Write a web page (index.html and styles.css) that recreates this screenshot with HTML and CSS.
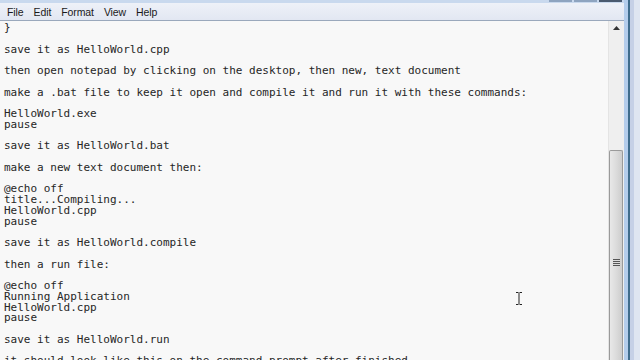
FILE: index.html
```html
<!DOCTYPE html>
<html>
<head>
<meta charset="utf-8">
<link rel="stylesheet" href="styles.css">
</head>
<body>
<div class="window">
  <div class="client">
    <div class="titlestrip">
      <span class="tbtn"></span><span class="tbtn"></span><span class="tbtn close"></span>
    </div>
    <div class="menubar">
      <span class="menu">File</span>
      <span class="menu">Edit</span>
      <span class="menu">Format</span>
      <span class="menu">View</span>
      <span class="menu">Help</span>
    </div>
    <div class="editor">
      <pre class="text">}

save it as HelloWorld.cpp

then open notepad by clicking on the desktop, then new, text document

make a .bat file to keep it open and compile it and run it with these commands:

HelloWorld.exe
pause

save it as HelloWorld.bat

make a new text document then:

@echo off
title...Compiling...
HelloWorld.cpp
pause

save it as HelloWorld.compile

then a run file:

@echo off
Running Application
HelloWorld.cpp
pause

save it as HelloWorld.run

it should look like this on the command prompt after finished</pre>
      <div class="cursor">
        <svg width="8" height="15" viewBox="0 0 8 15"><path d="M1 1.5h2.5M4.5 1.5H7M4 2v11M1 13.5h2.5M4.5 13.5H7" stroke="#222" stroke-width="1" fill="none"/></svg>
      </div>
      <div class="scrollbar">
        <div class="arrow"><svg width="7" height="4" viewBox="0 0 7 4"><path d="M0 4L3.5 0L7 4Z" fill="#333"/></svg></div>
        <div class="track">
          <div class="thumb"><span class="grip"></span></div>
        </div>
      </div>
    </div>
  </div>
  <div class="frame">
    <span class="f1"></span><span class="f2"></span><span class="f3"></span>
  </div>
</div>
</body>
</html>
```
FILE: styles.css
```css
html, body {
  margin: 0;
  padding: 0;
  width: 640px;
  height: 360px;
  overflow: hidden;
  background: #f8f8f8;
}
.window {
  display: flex;
  width: 640px;
  height: 360px;
}
.client {
  flex: 1;
  display: flex;
  flex-direction: column;
  min-width: 0;
}
.titlestrip {
  height: 3px;
  background: #c9d9ee;
  display: flex;
  justify-content: flex-end;
  gap: 2px;
  padding-right: 2px;
}
.tbtn {
  width: 23px;
  height: 2px;
  background: #8ea4c0;
}
.tbtn.close {
  background: #4a5a70;
}
.menubar {
  height: 17px;
  background: linear-gradient(#eef1f8, #e2e7f2);
  border-bottom: 1px solid #9aa8bc;
  display: flex;
  align-items: center;
  font-family: "Liberation Sans", Arial, sans-serif;
  font-size: 10.5px;
  letter-spacing: -0.1px;
  color: #1a1a1a;
  padding-left: 7px;
  gap: 10px;
}
.editor {
  flex: 1;
  display: flex;
  position: relative;
  min-height: 0;
  background: #f8f8f8;
}
.text {
  flex: 1;
  margin: 0;
  padding: 2px 0 0 4px;
  font-family: "DejaVu Sans Mono", "Liberation Mono", monospace;
  font-size: 11px;
  line-height: 10.75px;
  color: #262626;
  overflow: hidden;
  white-space: pre;
}
.cursor {
  position: absolute;
  left: 515px;
  top: 270px;
}
.scrollbar {
  width: 15px;
  display: flex;
  flex-direction: column;
  background: #efefef;
  border-left: 1px solid #e4e4e4;
}
.arrow {
  height: 14px;
  display: flex;
  align-items: center;
  justify-content: center;
}
.track {
  flex: 1;
  padding-top: 115px;
  display: flex;
}
.thumb {
  flex: 1;
  margin: 0 1px 0 0;
  border: 1px solid #9a9a9a;
  border-bottom: none;
  border-radius: 2px 2px 0 0;
  background: linear-gradient(90deg, #e8e8e8, #dcdcdc 50%, #cdcdcd);
  display: flex;
  justify-content: center;
  padding-top: 108px;
}
.grip {
  width: 7px;
  height: 7px;
  background: repeating-linear-gradient(#555 0 1px, #dcdcdc 1px 2px);
}
.frame {
  width: 16px;
  display: flex;
  background: #dfe5f1;
}
.f1 {
  width: 4px;
  background: #b4cdec;
}
.f2 {
  width: 2px;
  background: #3f6c8c;
}
.f3 {
  width: 4px;
  background: #c6d0e6;
}
```
